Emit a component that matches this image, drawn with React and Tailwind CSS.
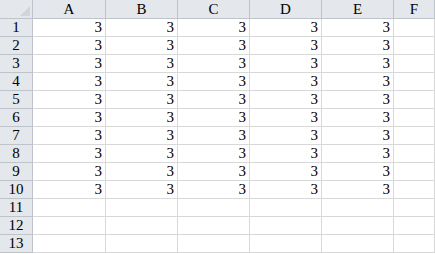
const cols = ['A', 'B', 'C', 'D', 'E', 'F'];
const rows = Array.from({ length: 13 }, (_, i) => i + 1);

export default function App() {
  return (
    <div className="w-[435px] h-[254px] overflow-hidden bg-white text-[15px] text-black" style={{ fontFamily: '"Liberation Serif", "Noto Sans CJK SC", serif' }}>
      <div className="grid grid-cols-[33px_73px_72px_72px_72px_72px_1fr]">
        {/* header row */}
        <div className="relative h-[19px] bg-[#e4e7eb] border-r border-b border-[#bfc4ca]">
          <div className="absolute right-[2px] bottom-[2px] w-0 h-0 border-l-[10px] border-l-transparent border-b-[10px] border-b-[#d2d5da]" />
        </div>
        {cols.map((c) => (
          <div key={c} className="h-[19px] bg-[#e4e7eb] border-r border-b border-[#bfc4ca] flex items-center justify-center leading-none">
            {c}
          </div>
        ))}

        {rows.map((r) => (
          <div key={r} className="contents">
            <div className="h-[18px] bg-[#e4e7eb] border-r border-b border-[#bfc4ca] flex items-center justify-center leading-none">
              {r}
            </div>
            {cols.map((c) => (
              <div key={c} className="h-[18px] border-r border-b border-[#d8d8d8] flex items-center justify-end pr-[3px] leading-none">
                {r <= 10 && c !== 'F' ? '3' : ''}
              </div>
            ))}
          </div>
        ))}
      </div>
    </div>
  );
}
